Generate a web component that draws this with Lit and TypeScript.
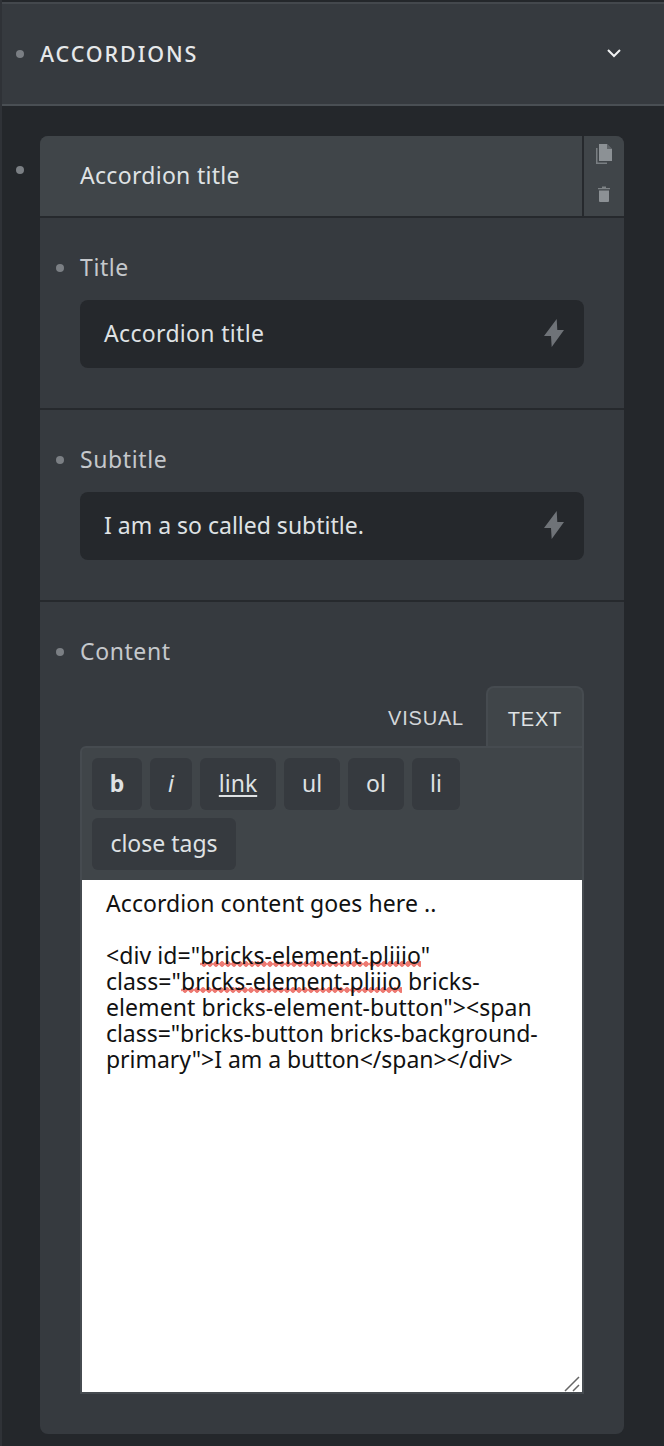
import { LitElement, html, css, svg } from "lit";
import { customElement } from "lit/decorators.js";

const bolt = svg`<path d="M12.700 0 L0 17 L7 17 L7.700 28 L20 11 L13.300 11 Z" fill="currentColor" />`;

@customElement("app-root")
export class AppRoot extends LitElement {
  static styles = css`
    :host {
      display: block;
      width: 664px;
      height: 1446px;
      overflow: hidden;
      background: #24272b;
      font-family: "Noto Sans", "Open Sans", sans-serif;
      color: #d6d9dc;
      box-sizing: border-box;
      border-left: 2px solid #2f3237;
      padding-top: 2px;
    }
    * { box-sizing: border-box; }
    .dot {
      position: absolute;
      width: 8px;
      height: 8px;
      border-radius: 50%;
      background: #7b7f84;
    }
    .head {
      position: relative;
      height: 104px;
      margin-left: -2px;
      background: #363a3f;
      border-top: 2px solid #44484d;
      border-bottom: 2px solid #4a4f54;
      border-left: 2px solid #4a4f54;
      display: flex;
      align-items: center;
      justify-content: space-between;
      padding: 0 42px 2px 38px;
      font-size: 21.5px;
      font-weight: 500;
      letter-spacing: 1.9px;
      color: #e6e8ea;
    }
    .head .dot { left: 14px; top: 46px; }
    .chev { width: 16px; height: 10px; color: #f0f1f2; }
    .wrap { position: relative; padding: 30px 40px 0 38px; }
    .wrap > .dot { left: 14px; top: 60px; }
    .card {
      background: #363a3f;
      border-radius: 8px;
      height: 1298px;
      overflow: hidden;
    }
    .cardhead {
      height: 82px;
      display: flex;
      background: #404549;
      border-bottom: 2px solid #26292d;
    }
    .cardtitle {
      flex: 1;
      padding-left: 40px;
      display: flex;
      align-items: center;
      font-size: 23px;
      letter-spacing: 0.3px;
      color: #dfe2e4;
      padding-bottom: 2px;
    }
    .actions {
      width: 42px;
      border-left: 2px solid #26292d;
      display: flex;
      flex-direction: column;
      align-items: center;
      padding-top: 8px;
      gap: 22px;
      color: #8c9195;
    }
    .actions svg { display: block; }
    .section {
      position: relative;
      height: 192px;
      padding: 32px 40px 0;
      border-bottom: 2px solid #26292d;
    }
    .section .dot { left: 16px; top: 46px; }
    .section.last { height: auto; border-bottom: 0; }
    label {
      display: block;
      height: 34px;
      line-height: 34px;
      font-size: 23px;
      color: #c5c8cc;
      letter-spacing: 0.6px;
    }
    .input {
      margin-top: 16px;
      height: 68px;
      border-radius: 8px;
      background: #25282c;
      display: flex;
      align-items: center;
      justify-content: space-between;
      padding: 0 20px 2px 24px;
      font-size: 23px;
      color: #dfe2e4;
    }
    .input.wide { letter-spacing: 0.33px; }
    .input svg { width: 20px; height: 28px; color: #6f7378; }
    .tabs {
      display: flex;
      justify-content: flex-end;
      align-items: flex-end;
      margin-top: 18px;
      height: 60px;
      font-family: "Liberation Sans", Arial, sans-serif;
      font-size: 20px;
      letter-spacing: 0.8px;
    }
    .tab {
      height: 60px;
      display: flex;
      align-items: center;
      color: #d3d6d9;
      padding: 4px 22px 0 0;
    }
    .tab.active {
      position: relative;
      z-index: 1;
      width: 98px;
      padding: 4px 0 0;
      justify-content: center;
      background: #404549;
      border: 2px solid #464b50;
      border-bottom: 0;
      border-radius: 8px 8px 0 0;
      color: #dfe2e4;
    }
    .editor {
      background: #404549;
      border: 2px solid #464b50;
      border-radius: 6px 0 0 0;
    }
    .bar {
      display: flex;
      flex-wrap: wrap;
      gap: 8px;
      padding: 10px;
      height: 132px;
      align-content: flex-start;
    }
    .btn {
      height: 52px;
      display: flex;
      align-items: center;
      justify-content: center;
      background: #363a3f;
      border-radius: 6px;
      font-size: 23px;
      line-height: 30px;
      padding-bottom: 2px;
      color: #dfe2e4;
    }
    .btn.b { font-weight: 700; }
    .btn.i { font-style: italic; }
    .btn.u { text-decoration: underline; text-underline-offset: 3px; }
    .area {
      position: relative;
      background: #fff;
      height: 512px;
      padding: 10px 24px 0;
      color: #111;
      font-size: 23px;
      line-height: 26px;
      letter-spacing: 0.07px;
      white-space: nowrap;
    }
    .tight { letter-spacing: -0.05px; }
    .sp {
      background-image: radial-gradient(circle at center, #ee7a72 0 2.5px, transparent 3px);
      background-size: 6px 6px;
      background-repeat: repeat-x;
      background-position: 1px calc(100% - 4px);
    }
    .grip { position: absolute; right: 2px; bottom: 0; width: 16px; height: 16px; color: #666; }
  `;

  render() {
    return html`
      <div class="head">
        <i class="dot"></i>
        <span>ACCORDIONS</span>
        <svg class="chev" viewBox="0 0 16 10"><path d="M2 2 L8 8 L14 2" fill="none" stroke="currentColor" stroke-width="2"/></svg>
      </div>
      <div class="wrap">
        <i class="dot"></i>
        <div class="card">
          <div class="cardhead">
            <div class="cardtitle">Accordion title</div>
            <div class="actions">
              <svg width="16" height="20" viewBox="0 0 16 20" fill="currentColor">
                <path d="M3 0 H11 L16 5 V17 H3 Z"/>
                <path d="M0 4 H1.500 V18.500 H11 V20 H0 Z" opacity=".75"/>
                <path d="M11 0 L16 5 H11 Z" fill="#404549" opacity=".6"/>
              </svg>
              <svg width="14" height="16" viewBox="0 0 14 16" fill="currentColor">
                <path d="M2 4.500 H12 V15 Q12 16 11 16 H3 Q2 16 2 15 Z"/>
                <path d="M1 2 H5 V0.500 H9 V2 H13 V3.200 H1 Z" opacity=".8"/>
              </svg>
            </div>
          </div>
          ${this.field("Title", "Accordion title", "wide")}
          ${this.field("Subtitle", "I am a so called subtitle.", "")}
          <div class="section last">
            <i class="dot"></i>
            <label>Content</label>
            <div class="tabs">
              <div class="tab">VISUAL</div>
              <div class="tab active">TEXT</div>
            </div>
            <div class="editor">
              <div class="bar">
                <div class="btn b" style="width:50px">b</div>
                <div class="btn i" style="width:42px">i</div>
                <div class="btn u" style="width:76px">link</div>
                <div class="btn" style="width:56px">ul</div>
                <div class="btn" style="width:56px">ol</div>
                <div class="btn" style="width:48px">li</div>
                <div class="btn" style="width:144px">close tags</div>
              </div>
              <div class="area">
                Accordion content goes here ..<br /><br />
                &lt;div id="<span class="sp">bricks-element-pliiio</span>"<br />
                class="<span class="sp">bricks-element-pliiio</span> bricks-<br />
                element bricks-element-button"&gt;&lt;span<br />
                <span class="tight">class="bricks-button bricks-background-</span><br />
                <span class="tight">primary"&gt;I am a button&lt;/span&gt;&lt;/div&gt;</span>
                <svg class="grip" viewBox="0 0 16 16"><path d="M1 15 L15 1 M9 15 L15 9" stroke="currentColor" stroke-width="1.500" fill="none"/></svg>
              </div>
            </div>
          </div>
        </div>
      </div>
    `;
  }

  field(name: string, value: string, cls: string) {
    return html`
      <div class="section">
        <i class="dot"></i>
        <label>${name}</label>
        <div class="input ${cls}">
          <span>${value}</span>
          <svg viewBox="0 0 20 28">${bolt}</svg>
        </div>
      </div>
    `;
  }
}
